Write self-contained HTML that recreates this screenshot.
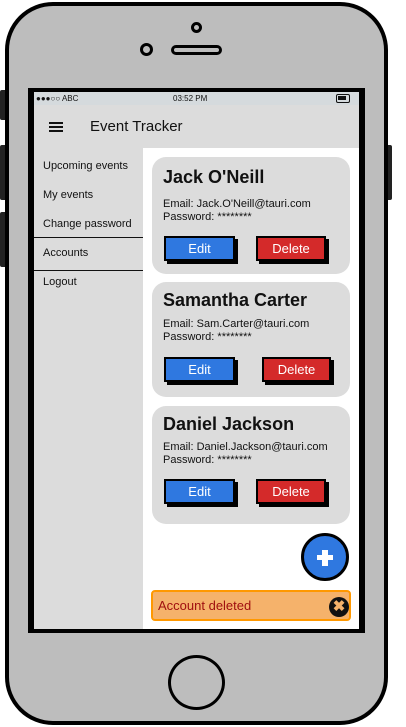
<!DOCTYPE html>
<html><head><style>
*{margin:0;padding:0;box-sizing:border-box}
body{width:406px;height:727px;background:#fff;position:relative;overflow:hidden;font-family:"Liberation Sans",sans-serif}
.a{position:absolute}
.btn{position:absolute;height:25px;border:2px solid #000;box-shadow:3px 3px 0 #000;color:#fff;font-size:13px;text-align:center;line-height:21px}
.e{background:#2f78e0}.d{background:#d42a2a}
.card{position:absolute;left:152px;width:198px;background:#dcdcdc;border-radius:14px}
.nm{position:absolute;left:11px;font-size:18px;font-weight:bold;color:#111}
.t{position:absolute;left:11px;font-size:11px;color:#111;line-height:13px}
.sb{position:absolute;left:43px;font-size:11px;color:#111}
</style></head><body>
<div class="a" style="left:0;top:90px;width:8px;height:30px;background:#222;border-radius:2px"></div>
<div class="a" style="left:0;top:145px;width:8px;height:55px;background:#222;border-radius:2px"></div>
<div class="a" style="left:0;top:212px;width:8px;height:55px;background:#222;border-radius:2px"></div>
<div class="a" style="left:384px;top:145px;width:8px;height:55px;background:#222;border-radius:2px"></div>
<div class="a" style="left:5px;top:2px;width:383px;height:723px;background:#bdbdbd;border:4px solid #000;border-radius:48px"></div>
<div class="a" style="left:191px;top:22px;width:11px;height:11px;border:3px solid #000;border-radius:50%"></div>
<div class="a" style="left:140px;top:43px;width:13px;height:13px;border:3px solid #000;border-radius:50%"></div>
<div class="a" style="left:171px;top:45px;width:51px;height:10px;border:3.5px solid #000;border-radius:5px"></div>
<div class="a" style="left:168px;top:655px;width:57px;height:55px;border:3px solid #000;border-radius:50%"></div>
<div class="a" style="left:28px;top:88px;width:337px;height:545px;background:#000"></div>
<div class="a" style="left:34px;top:92px;width:325px;height:537px;background:#fff"></div>
<div class="a" style="left:34px;top:92px;width:325px;height:13px;background:#d5dadd;font-size:8px;line-height:13px;color:#111">
<span class="a" style="left:2px">●●●○○ ABC</span><span class="a" style="left:139px">03:52 PM</span>
<span class="a" style="left:302px;top:2px;width:14px;height:9px;border:1.5px solid #111;border-radius:2px"><span class="a" style="left:1px;top:1px;width:8px;height:4px;background:#111"></span></span></div>
<div class="a" style="left:34px;top:105px;width:325px;height:43px;background:#dcdcdc"></div>
<div class="a" style="left:49px;top:122px;width:14px;height:2px;background:#111;box-shadow:0 4px 0 #111,0 8px 0 #111"></div>
<div class="a" style="left:90px;top:118px;font-size:15px;color:#111">Event Tracker</div>
<div class="a" style="left:34px;top:148px;width:109px;height:481px;background:#dcdcdc"></div>
<div class="sb" style="top:160px">Upcoming events</div>
<div class="sb" style="top:189px">My events</div>
<div class="sb" style="top:218px">Change password</div>
<div class="a" style="left:34px;top:237px;width:109px;height:1px;background:#111"></div>
<div class="sb" style="top:247px">Accounts</div>
<div class="a" style="left:34px;top:270px;width:109px;height:1px;background:#111"></div>
<div class="sb" style="top:276px">Logout</div>

<div class="card" style="top:157px;height:117px">
<div class="nm" style="top:10px">Jack O'Neill</div>
<div class="t" style="top:41px">Email: Jack.O'Neill@tauri.com<br>Password: ********</div>
<div class="btn e" style="left:12px;top:79px;width:71px">Edit</div>
<div class="btn d" style="left:104px;top:79px;width:70px">Delete</div></div>
<div class="card" style="top:282px;height:115px">
<div class="nm" style="top:8px">Samantha Carter</div>
<div class="t" style="top:36px">Email: Sam.Carter@tauri.com<br>Password: ********</div>
<div class="btn e" style="left:12px;top:75px;width:71px">Edit</div>
<div class="btn d" style="left:110px;top:75px;width:69px">Delete</div></div>
<div class="card" style="top:406px;height:118px">
<div class="nm" style="top:8px">Daniel Jackson</div>
<div class="t" style="top:35px">Email: Daniel.Jackson@tauri.com<br>Password: ********</div>
<div class="btn e" style="left:12px;top:73px;width:71px">Edit</div>
<div class="btn d" style="left:104px;top:73px;width:70px">Delete</div></div>

<div class="a" style="left:301px;top:533px;width:48px;height:48px;border-radius:50%;background:#2f78e0;border:3px solid #000"></div>
<div class="a" style="left:317px;top:555px;width:16px;height:5px;background:#fff"></div>
<div class="a" style="left:322px;top:550px;width:6px;height:16px;background:#fff"></div>
<div class="a" style="left:151px;top:590px;width:200px;height:31px;background:#f5b26b;border:2px solid #ff9800;border-radius:4px"></div>
<div class="a" style="left:158px;top:598px;font-size:13px;color:#a01010">Account deleted</div>
<div class="a" style="left:329px;top:597px;width:20px;height:20px;border-radius:50%;background:#111;color:#f5b26b;font-size:15px;font-weight:bold;text-align:center;line-height:20px">✖</div>
</body></html>
